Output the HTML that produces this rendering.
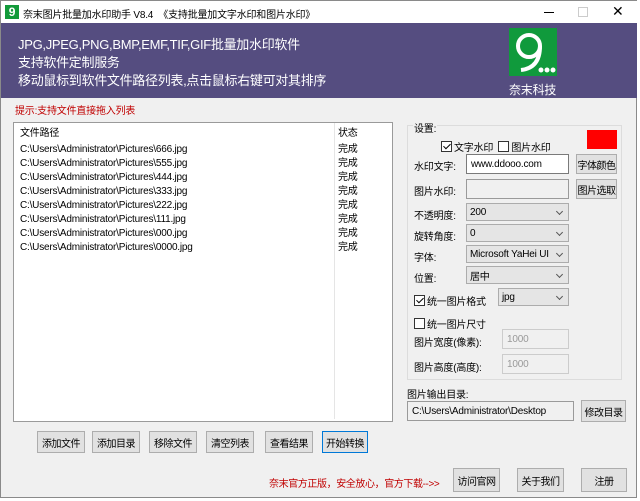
<!DOCTYPE html>
<html><head><meta charset="utf-8"><style>
*{box-sizing:border-box;margin:0;padding:0}
body{width:640px;height:501px;background:#fff;font-family:"Liberation Sans","Noto Sans CJK SC",sans-serif;font-size:10px;letter-spacing:-0.2px;color:#000;position:relative;overflow:hidden}
.a{position:absolute;white-space:nowrap}
.win{position:absolute;left:0;top:0;width:637px;height:498px;border:1px solid #8a8a8a;background:#f0f0f0}
.btn{position:absolute;background:#e1e1e1;border:1px solid #adadad;text-align:center;font-size:10px;letter-spacing:-0.5px;display:flex;align-items:center;justify-content:center;white-space:nowrap;overflow:hidden}
.inp{position:absolute;background:#fff;border:1px solid #7a7a7a;padding-left:4px;display:flex;align-items:center;white-space:nowrap;overflow:hidden}
.sel{position:absolute;background:#e5e5e5;border:1px solid #acacac;padding-left:3px;display:flex;align-items:center;white-space:nowrap}
.sel:after{content:"";position:absolute;right:6px;top:5px;width:4px;height:4px;border-right:1px solid #555;border-bottom:1px solid #555;transform:rotate(45deg)}
.cb{display:inline-block;width:11px;height:11px;border:1px solid #333;vertical-align:-1px;margin-right:2px;background:#fff;position:relative}
.cb.k:after{content:"";position:absolute;left:3px;top:0px;width:3px;height:6px;border-right:1px solid #000;border-bottom:1px solid #000;transform:rotate(45deg)}
.row{position:absolute;left:6px;height:14px;line-height:14px;white-space:nowrap}
</style></head><body>
<div class="win">
<div class="a" style="left:0;top:0;width:636px;height:22px;background:#fff"></div>
<div class="a" style="left:4px;top:4px;width:14px;height:14px;background:#129a3a;color:#fff;font-size:12px;line-height:14px;text-align:center;font-weight:bold">9</div>
<div class="a" style="left:22px;top:5px;font-size:10px">奈末图片批量加水印助手 V8.4 &nbsp;《支持批量加文字水印和图片水印》</div>
<div class="a" style="left:543px;top:11px;width:10px;height:1px;background:#000"></div>
<div class="a" style="left:577px;top:6px;width:10px;height:10px;border:1px solid #ccc"></div>
<div class="a" style="left:611px;top:2px;font-size:14px">✕</div>
<div class="a" style="left:0;top:22px;width:636px;height:75px;background:#554d80"></div>
<div class="a" style="left:17px;top:35px;color:#fff;font-size:13px;line-height:18px;letter-spacing:-0.3px">JPG,JPEG,PNG,BMP,EMF,TIF,GIF批量加水印软件<br>支持软件定制服务<br>移动鼠标到软件文件路径列表,点击鼠标右键可对其排序</div>
<div class="a" style="left:508px;top:27px;width:48px;height:48px;background:#109a3c;overflow:hidden">
<svg width="48" height="48"><circle cx="20" cy="18" r="11" fill="none" stroke="#fff" stroke-width="4"/><path d="M31 18 Q31 40 12 42" fill="none" stroke="#fff" stroke-width="4"/><circle cx="32" cy="42" r="2.5" fill="#fff"/><circle cx="38" cy="42" r="2.5" fill="#fff"/><circle cx="44" cy="42" r="2.5" fill="#fff"/></svg></div>
<div class="a" style="left:508px;top:80px;color:#fff;font-size:12px">奈末科技</div>
<div class="a" style="left:14px;top:101px;color:#c00000;font-size:10px">提示:支持文件直接拖入列表</div>
<div class="a" style="left:12px;top:121px;width:380px;height:300px;background:#fff;border:1px solid #9a9a9a">
<div class="a" style="left:320px;top:0;width:1px;height:296px;background:#e5e5e5"></div>
<div class="row" style="top:4px">文件路径</div><div class="row" style="top:4px;left:324px">状态</div>
<div class="row" style="top:20px">C:\Users\Administrator\Pictures\666.jpg</div><div class="row" style="top:20px;left:324px">完成</div>
<div class="row" style="top:34px">C:\Users\Administrator\Pictures\555.jpg</div><div class="row" style="top:34px;left:324px">完成</div>
<div class="row" style="top:48px">C:\Users\Administrator\Pictures\444.jpg</div><div class="row" style="top:48px;left:324px">完成</div>
<div class="row" style="top:62px">C:\Users\Administrator\Pictures\333.jpg</div><div class="row" style="top:62px;left:324px">完成</div>
<div class="row" style="top:76px">C:\Users\Administrator\Pictures\222.jpg</div><div class="row" style="top:76px;left:324px">完成</div>
<div class="row" style="top:90px">C:\Users\Administrator\Pictures\111.jpg</div><div class="row" style="top:90px;left:324px">完成</div>
<div class="row" style="top:104px">C:\Users\Administrator\Pictures\000.jpg</div><div class="row" style="top:104px;left:324px">完成</div>
<div class="row" style="top:118px">C:\Users\Administrator\Pictures\0000.jpg</div><div class="row" style="top:118px;left:324px">完成</div>
</div>
<div class="btn" style="left:36px;top:430px;width:48px;height:22px">添加文件</div>
<div class="btn" style="left:91px;top:430px;width:48px;height:22px">添加目录</div>
<div class="btn" style="left:148px;top:430px;width:48px;height:22px">移除文件</div>
<div class="btn" style="left:205px;top:430px;width:48px;height:22px">清空列表</div>
<div class="btn" style="left:264px;top:430px;width:48px;height:22px">查看结果</div>
<div class="btn" style="left:321px;top:430px;width:46px;height:22px;border:1px solid #0078d7">开始转换</div>
<div class="a" style="left:268px;top:474px;color:#c00000;letter-spacing:-0.4px">奈末官方正版，安全放心，官方下载--&gt;&gt;</div>
<div class="btn" style="left:452px;top:467px;width:47px;height:24px">访问官网</div>
<div class="btn" style="left:516px;top:467px;width:47px;height:24px">关于我们</div>
<div class="btn" style="left:580px;top:467px;width:46px;height:24px">注册</div>
<div class="a" style="left:406px;top:124px;width:215px;height:255px;border:1px solid #dcdcdc"></div>
<div class="a" style="left:412px;top:119px;background:#f0f0f0;padding:0 1px">设置:</div>
<div class="a" style="left:440px;top:138px"><span class="cb k"></span>文字水印 &nbsp;<span class="cb"></span>图片水印</div>
<div class="a" style="left:586px;top:129px;width:30px;height:19px;background:#f00"></div>
<div class="a" style="left:413px;top:157px">水印文字:</div>
<div class="inp" style="left:465px;top:153px;width:103px;height:20px">www.ddooo.com</div>
<div class="btn" style="left:575px;top:153px;width:41px;height:20px">字体颜色</div>
<div class="a" style="left:413px;top:182px">图片水印:</div>
<div class="inp" style="left:465px;top:178px;width:103px;height:20px;background:#f0f0f0;border-color:#9a9a9a"></div>
<div class="btn" style="left:575px;top:178px;width:41px;height:20px">图片选取</div>
<div class="a" style="left:413px;top:206px">不透明度:</div>
<div class="sel" style="left:465px;top:202px;width:103px;height:18px">200</div>
<div class="a" style="left:413px;top:227px">旋转角度:</div>
<div class="sel" style="left:465px;top:223px;width:103px;height:18px">0</div>
<div class="a" style="left:413px;top:248px">字体:</div>
<div class="sel" style="left:465px;top:244px;width:103px;height:18px">Microsoft YaHei UI</div>
<div class="a" style="left:413px;top:269px">位置:</div>
<div class="sel" style="left:465px;top:265px;width:103px;height:18px">居中</div>
<div class="a" style="left:413px;top:292px"><span class="cb k"></span>统一图片格式</div>
<div class="sel" style="left:497px;top:287px;width:71px;height:18px">jpg</div>
<div class="a" style="left:413px;top:315px"><span class="cb"></span>统一图片尺寸</div>
<div class="a" style="left:413px;top:333px">图片宽度(像素):</div>
<div class="inp" style="left:501px;top:328px;width:67px;height:20px;background:#f0f0f0;border-color:#ccc;color:#999">1000</div>
<div class="a" style="left:413px;top:358px">图片高度(高度):</div>
<div class="inp" style="left:501px;top:353px;width:67px;height:20px;background:#f0f0f0;border-color:#ccc;color:#999">1000</div>
<div class="a" style="left:406px;top:385px">图片输出目录:</div>
<div class="inp" style="left:406px;top:400px;width:167px;height:20px;background:#f0f0f0;border-color:#9a9a9a">C:\Users\Administrator\Desktop</div>
<div class="btn" style="left:580px;top:399px;width:45px;height:22px">修改目录</div>
</div>
</body></html>
